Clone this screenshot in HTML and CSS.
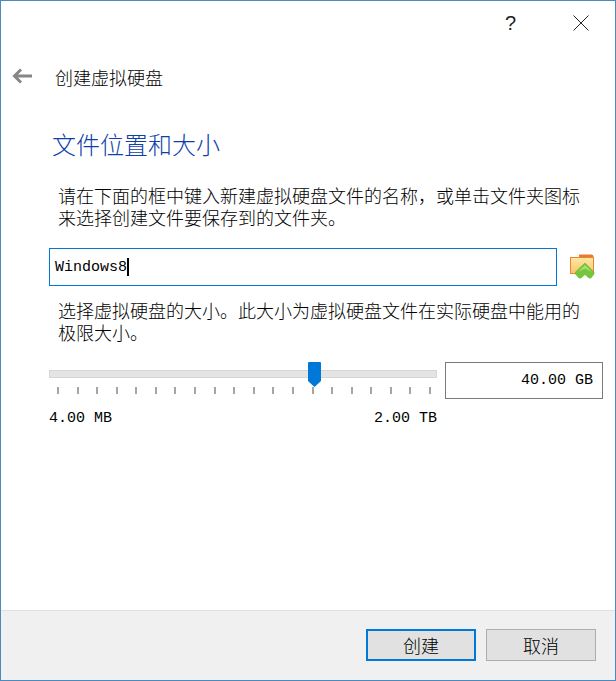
FILE: index.html
```html
<!DOCTYPE html>
<html lang="zh-CN">
<head>
<meta charset="utf-8">
<title>创建虚拟硬盘</title>
<link rel="stylesheet" href="styles.css">
</head>
<body>
<div class="window">
  <div class="titlebar">
    <span class="help">?</span>
    <svg class="close" width="16" height="16" viewBox="0 0 16 16"><path d="M0.5 0.5L15.5 15.5M15.5 0.5L0.5 15.5" stroke="#222" stroke-width="1" fill="none"/></svg>
  </div>
  <div class="nav">
    <svg class="back" width="20" height="16" viewBox="0 0 20 16"><path d="M9 1.5L2.5 8L9 14.5M3 8H20" stroke="#868686" stroke-width="3" fill="none"/></svg>
    <span class="nav-title">创建虚拟硬盘</span>
  </div>
  <main class="content">
    <h1 class="heading">文件位置和大小</h1>
    <p class="desc first">请在下面的框中键入新建虚拟硬盘文件的名称，或单击文件夹图标来选择创建文件要保存到的文件夹。</p>
    <div class="file-row">
      <div class="file-input"><span class="mono">Windows8</span><span class="caret"></span></div>
      <svg class="folder" width="26" height="26" viewBox="0 0 26 26">
        <defs><linearGradient id="fg" x1="0" y1="0" x2="0" y2="1"><stop offset="0" stop-color="#fee9a4"/><stop offset="1" stop-color="#fbc469"/></linearGradient></defs>
        <path d="M9 1.500h12.500q2 0 2 2V7H9z" fill="#ec7a2a"/>
        <rect x="0.500" y="4.500" width="23" height="16" fill="url(#fg)" stroke="#e8853a"/>
        <path d="M15 10L24 19V21L21 25H19L15 21.500L11 25H9L5.500 21V19z" fill="#74c63a" stroke="#66b22f" stroke-width="0.600"/>
        <path d="M15 12L22 19L15 15.500L8 19z" fill="#a9e070"/>
      </svg>
    </div>
    <p class="desc second">选择虚拟硬盘的大小。此大小为虚拟硬盘文件在实际硬盘中能用的极限大小。</p>
    <div class="size-row">
      <div class="slider-col">
        <div class="slider">
          <div class="track"></div>
          <svg class="thumb" width="13" height="25" viewBox="0 0 13 25"><path d="M1 0H12Q13 0 13 1V19L6.500 25L0 19V1Q0 0 1 0z" fill="#0078d7"/></svg>
        </div>
        <div class="ticks">
          <i></i><i></i><i></i><i></i><i></i><i></i><i></i><i></i><i></i><i></i>
          <i></i><i></i><i></i><i></i><i></i><i></i><i></i><i></i><i></i><i></i>
        </div>
        <div class="limits mono"><span>4.00 MB</span><span>2.00 TB</span></div>
      </div>
      <div class="size-box mono">40.00 GB</div>
    </div>
  </main>
  <footer class="footer">
    <button class="btn primary">创建</button>
    <button class="btn">取消</button>
  </footer>
</div>
</body>
</html>
```
FILE: styles.css
```css
* { box-sizing: border-box; }
html, body { margin: 0; padding: 0; height: 100%; background: #fff; }
body { font-family: "Noto Sans CJK SC", "Liberation Serif", sans-serif; font-weight: 300; color: #000; overflow: hidden; }
.window {
  width: 616px;
  height: 681px;
  border: 1px solid #4a8ac0;
  display: flex;
  flex-direction: column;
  background: #fff;
}
.titlebar {
  height: 44px;
  position: relative;
  flex: none;
  display: flex;
  justify-content: flex-end;
  align-items: center;
  padding-right: 26px;
}
.help { font-family: "Liberation Sans", sans-serif; font-size: 20px; color: #222; margin-right: 57px; line-height: 1; }
.close { display: block; }
.nav { display: flex; align-items: center; height: 44px; flex: none; margin-top: 10px; padding-left: 11px; }
.back { display: block; margin-right: 23px; margin-top: -3px; }
.nav-title { font-size: 18px; line-height: 24px; color: #000; }
.content { flex: 1; padding: 0 0 0 48px; min-height: 0; }
.heading { margin: 29px 0 0 3px; font-weight: 200; font-size: 24px; line-height: 32px; color: #0f3fa8; }
.desc { margin: 0; font-size: 18px; line-height: 22px; width: 538px; color: #000; }
.first { margin: 24px 0 0 9px; }
.file-row { display: flex; align-items: center; margin-top: 20px; }
.file-input {
  width: 508px;
  height: 38px;
  border: 1px solid #0078d7;
  display: flex;
  align-items: center;
  padding-left: 5px;
}
.mono { font-family: "Liberation Mono", monospace; font-size: 15px; }
.caret { width: 2px; height: 18px; background: #000; display: block; }
.folder { display: block; margin-left: 13px; margin-top: -2px; }
.second { margin: 13px 0 0 9px; }
.size-row { display: flex; margin-top: 19px; }
.slider-col { width: 388px; }
.slider { height: 25px; position: relative; padding-top: 8px; }
.track { height: 8px; background: #e3e5e5; border: 1px solid #d6d6d6; }
.thumb { position: absolute; left: 259px; top: 0; display: block; }
.ticks { display: flex; justify-content: space-between; padding: 0 0 0 8px; width: 382px; height: 7px; }
.ticks i { width: 2px; height: 7px; background: #a7a69a; display: block; }
.limits { display: flex; justify-content: space-between; margin-top: 15px; line-height: 20px; }
.size-box {
  width: 158px;
  height: 37px;
  margin-left: 8px;
  border: 1px solid #7a7a7a;
  display: flex;
  align-items: center;
  justify-content: flex-end;
  padding-right: 9px;
}
.footer {
  flex: none;
  height: 70px;
  background: #f0f0f0;
  border-top: 1px solid #dfdfdf;
  display: flex;
  justify-content: flex-end;
  gap: 10px;
  padding: 18px 19px 0 0;
}
.btn {
  width: 110px;
  height: 32px;
  background: #e1e1e1;
  border: 1px solid #adadad;
  font-family: inherit;
  font-weight: 300;
  font-size: 18px;
  line-height: 1;
  padding: 0;
  color: #000;
}
.primary { border: 2px solid #0078d7; }
```
